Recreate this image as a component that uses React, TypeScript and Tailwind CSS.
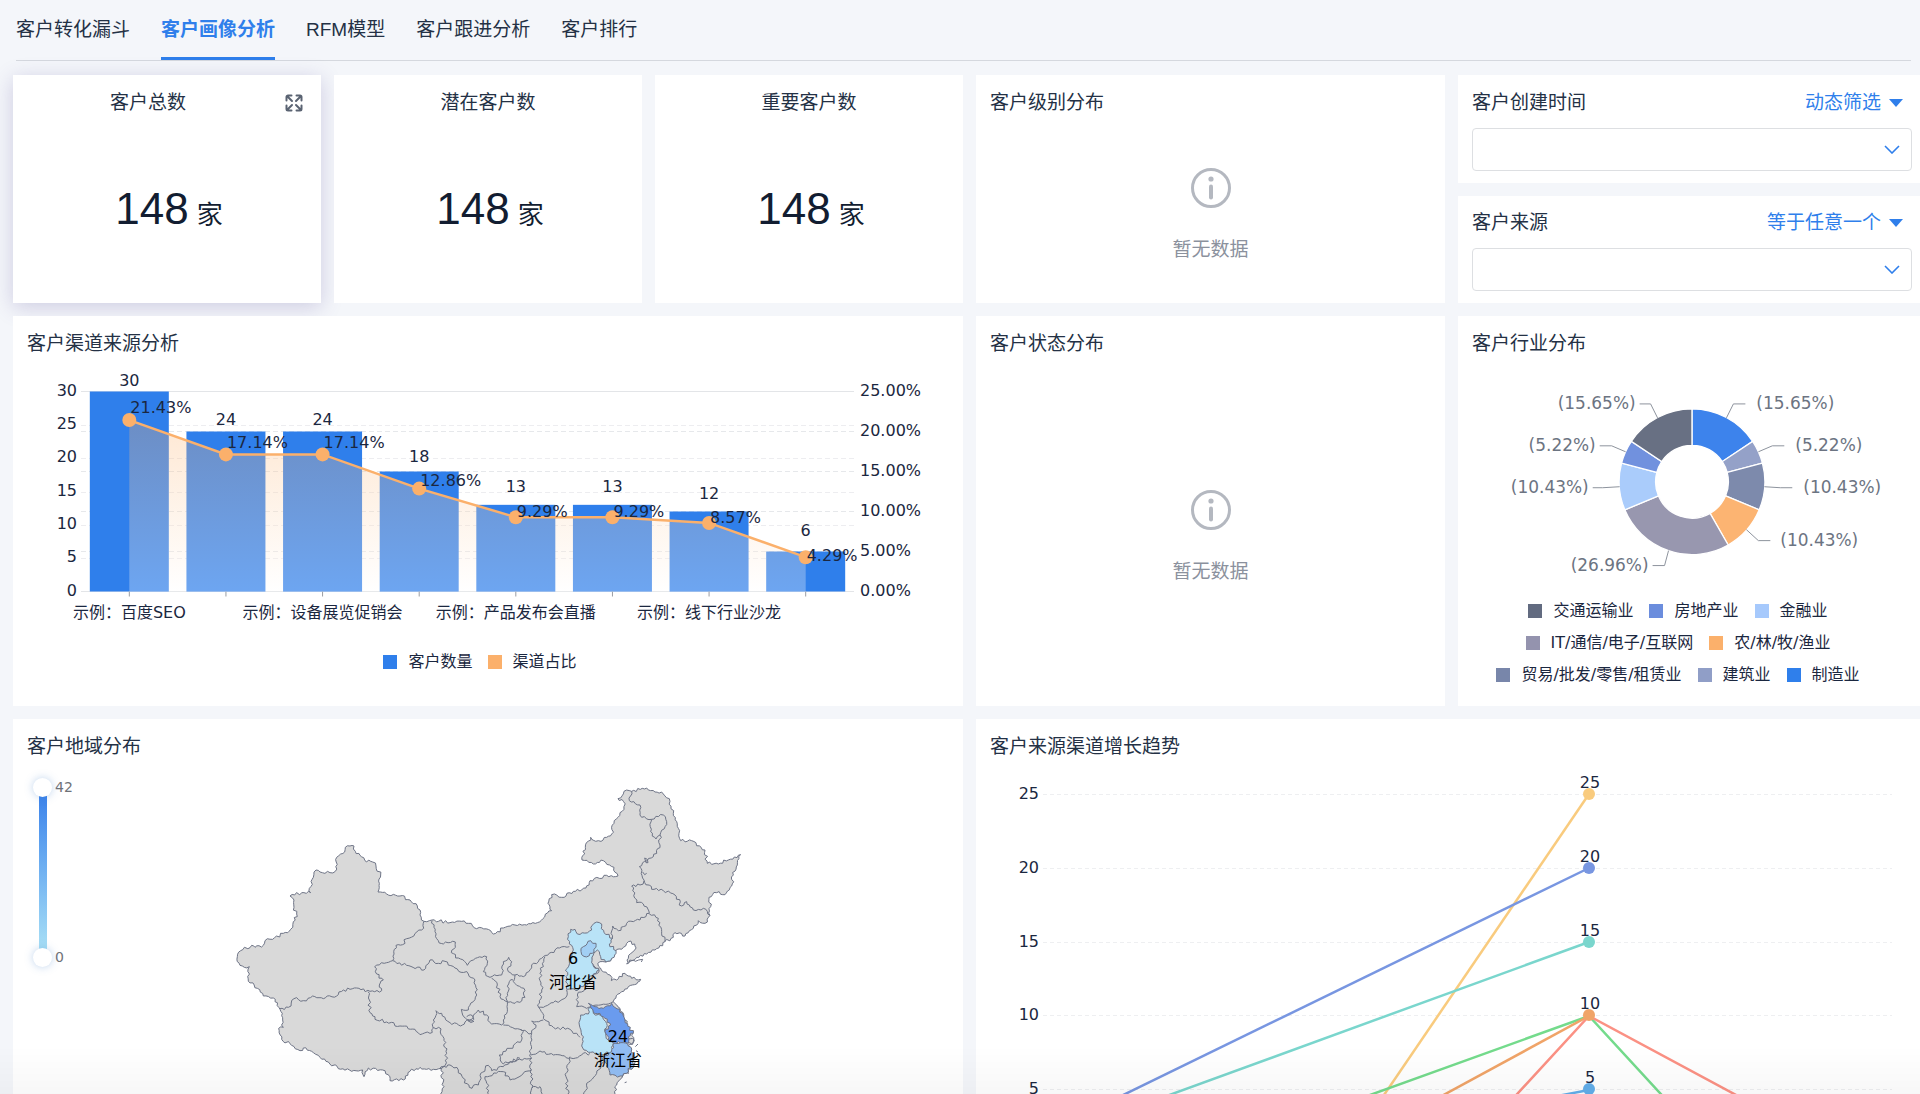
import type { ReactNode } from "react";

const TABS = ["客户转化漏斗", "客户画像分析", "RFM模型", "客户跟进分析", "客户排行"];
const ACTIVE_TAB = "客户画像分析";

const STATS = [
  { title: "客户总数", value: 148, unit: "家", hovered: true },
  { title: "潜在客户数", value: 148, unit: "家", hovered: false },
  { title: "重要客户数", value: 148, unit: "家", hovered: false },
];

// lift: how far each label's baseline sits above its bar or point
const CHANNELS = [
  { name: "示例：百度SEO", count: 30, rate: 21.43, lift: 6, rateLift: 7 },
  { name: "", count: 24, rate: 17.14, lift: 7, rateLift: 6 },
  { name: "示例：设备展览促销会", count: 24, rate: 17.14, lift: 7, rateLift: 6 },
  { name: "", count: 18, rate: 12.86, lift: 10, rateLift: 3 },
  { name: "示例：产品发布会直播", count: 13, rate: 9.29, lift: 13, rateLift: 0 },
  { name: "", count: 13, rate: 9.29, lift: 13, rateLift: 0 },
  { name: "示例：线下行业沙龙", count: 12, rate: 8.57, lift: 13, rateLift: 0 },
  { name: "", count: 6, rate: 4.29, lift: 16, rateLift: -4 },
];

const INDUSTRIES = [
  { rate: 15.65, color: "#3d83ec", line: "269,54 276,40 288,40", x: 299, y: 45 },
  { rate: 5.22, color: "#94a1c8", line: "301,88 315,82 327,82", x: 338, y: 87 },
  { rate: 10.43, color: "#7d8aac", line: "307,123 323,124 335,124", x: 346, y: 129 },
  { rate: 10.43, color: "#fcb472", line: "289,166 301,177 313,177", x: 323, y: 182 },
  { rate: 26.96, color: "#9897af", line: "211,187 207,202 195,202", x: 191, y: 207 },
  { rate: 10.43, color: "#aaccfb", line: "162,123 145,124 135,124", x: 131, y: 129 },
  { rate: 5.22, color: "#7191de", line: "168,88 154,82 142,82", x: 138, y: 87 },
  { rate: 15.65, color: "#687083", line: "200,54 193,40 182,40", x: 178, y: 45 },
];

const INDUSTRY_LEGEND = [
  { name: "交通运输业", color: "bg-[#626b80]" },
  { name: "房地产业", color: "bg-[#6b8ddd]" },
  { name: "金融业", color: "bg-[#a6c9fc]" },
  { name: "IT/通信/电子/互联网", color: "bg-[#9493ae]" },
  { name: "农/林/牧/渔业", color: "bg-[#fbb06b]" },
  { name: "贸易/批发/零售/租赁业", color: "bg-[#7886aa]" },
  { name: "建筑业", color: "bg-[#909ec7]" },
  { name: "制造业", color: "bg-[#2f7feb]" },
];

const TREND_LINES = [
  { color: "#f9cb7e", points: "393,350 613,27" },
  { color: "#7896e1", points: "102,350 613,101" },
  { color: "#7ad6cd", points: "133,350 613,175" },
  { color: "#74db8c", points: "333,350 613,249 706,350" },
  { color: "#fb9184", points: "520,350 613,249 801,350" },
  { color: "#f0a468", points: "427,350 613,249" },
  { color: "#62aeea", points: "471,350 613,323" },
];

const TREND_POINTS = [
  { value: 25, color: "#f9cb7e" },
  { value: 20, color: "#7896e1" },
  { value: 15, color: "#7ad6cd" },
  { value: 10, color: "#f0a468" },
  { value: 5, color: "#62aeea" },
];

const MAINLAND =
  "52,410 62,392 95,376 105,382 130,376 135,362 158,358 190,340 212,328 220,305 230,282 222,262 222,240 210,228 245,218 265,214 272,218 268,205 280,172 288,150 300,156 330,158 346,154 350,112 362,102 374,96 376,82 390,78 402,78 406,94 420,106 434,120 458,126 468,138 482,165 478,190 474,216 500,222 540,228 570,240 592,258 600,285 612,304 636,300 690,308 725,304 745,310 770,326 812,332 820,342 850,324 885,315 920,315 952,308 995,272 984,250 995,224 1025,232 1060,214 1098,204 1110,182 1160,166 1194,168 1182,142 1150,122 1120,132 1086,120 1096,82 1112,52 1135,62 1160,52 1175,42 1182,10 1200,-22 1212,-32 1210,-56 1194,-64 1212,-86 1235,-86 1280,-96 1305,-84 1330,-78 1350,-56 1360,-20 1375,25 1382,62 1415,62 1455,90 1462,130 1495,132 1525,120 1562,104 1552,135 1540,165 1535,198 1515,224 1490,218 1467,232 1472,260 1470,286 1455,310 1435,302 1420,325 1395,348 1365,338 1360,352 1335,365 1305,390 1280,402 1250,412 1220,432 1225,415 1244,390 1244,372 1225,365 1210,382 1186,395 1175,415 1157,426 1140,425 1135,438 1145,452 1170,465 1174,482 1190,480 1215,460 1235,475 1262,478 1250,492 1225,500 1200,520 1180,545 1200,565 1215,600 1238,640 1240,665 1225,680 1240,705 1242,735 1208,768 1190,795 1185,822 1180,900 680,900 662,822 672,800 664,745 640,748 620,748 600,742 570,754 550,780 510,782 504,764 488,750 445,744 432,770 428,750 395,754 355,746 325,726 300,712 275,694 250,684 240,692 215,676 185,658 176,625 190,622 188,600 180,568 165,545 160,534 130,528 112,505 85,484 88,440 60,436 52,410";

const BORDERS = [
  "180,566 205,562 222,536 250,542 278,528 310,536 355,524 370,510 410,504 450,514 485,512",
  "485,512 478,495 490,480 470,462 464,440 500,428 518,422",
  "518,422 528,376 548,374 560,356 605,330 612,304",
  "636,302 645,335 655,362 670,372 706,366 706,382 694,398 715,414 742,436 760,420 800,410 802,430 790,455 810,472",
  "518,422 560,436 612,450 630,420 655,430 675,424 705,444 745,462 765,480 772,510 760,545 745,570 724,568 728,585 748,600 735,606 722,618 690,608 665,580 648,572 640,600 640,625 630,640 600,644 585,628 540,618 500,606 465,598 450,578 448,540 444,515",
  "640,622 656,622 672,655 680,700 676,735 660,745",
  "660,745 690,735 715,750 730,775 748,802 775,795 782,760 805,736 815,752 850,740 870,725 900,715",
  "900,628 910,635 905,660 870,685 838,705 850,732 885,725 935,715",
  "748,600 760,585 775,570 800,585 815,612 845,615 850,600 862,575 862,545 840,530 832,495 815,475",
  "810,472 845,465 850,425 866,412 875,425 865,455 885,465 880,485 912,505 915,532 885,550 860,540 862,520 868,485 880,480",
  "885,465 910,470 935,435 965,415 1005,390 1048,380",
  "975,410 960,460 965,510 956,562 970,595",
  "956,562 1000,548 1038,532 1040,510",
  "970,595 1000,622 1050,628 1080,652",
  "850,615 900,628 935,640 948,615 935,603 970,600",
  "935,640 932,700 935,805 932,840",
  "932,705 960,693 1000,705 1045,715 1085,705 1110,700",
  "1050,710 1038,770 1045,840",
  "1150,725 1130,760 1100,790 1090,840",
  "935,750 870,780 850,755 795,770 800,790 812,840",
  "935,805 960,800 980,840",
  "1070,560 1072,525 1095,505 1115,475 1138,452",
  "1070,560 1100,565 1165,552 1180,545",
  "1235,-86 1228,-58 1260,-45 1265,-8 1295,-2 1330,-15 1340,5 1320,45 1320,75 1300,110 1258,140 1272,180",
  "1295,-2 1292,35 1308,57 1320,45",
  "1272,180 1295,208 1330,212 1365,225 1385,258 1400,245 1420,270 1450,265 1470,286",
  "1272,183 1260,195 1235,198 1250,248 1270,252 1288,280",
  "1288,280 1260,300 1220,310 1195,332 1178,318 1177,355",
  "1288,282 1315,295 1325,335 1335,365",
  "1115,405 1112,425 1122,438 1138,445",
  "1222,650 1238,655 1240,668 1222,668",
];

const PROVINCES = [
  {
    name: "河北省",
    color: "#b9e3f7",
    points:
      "1045,350 1052,328 1065,328 1072,342 1115,330 1122,310 1145,312 1152,338 1178,355 1168,372 1188,392 1175,415 1157,426 1142,410 1132,390 1120,405 1115,428 1120,438 1138,450 1105,475 1090,500 1068,512 1040,508 1038,470 1042,445 1055,410 1060,390 1048,372 1045,350",
  },
  {
    name: "北京市",
    color: "#a2cff4",
    points:
      "1090,380 1098,376 1104,364 1112,362 1118,370 1128,370 1128,382 1122,396 1110,400 1108,407 1085,404 1083,394 1090,380",
  },
  {
    name: "安徽省",
    color: "#b9e3f7",
    points:
      "1110,562 1120,580 1150,585 1160,610 1155,635 1165,660 1180,670 1175,695 1150,705 1125,702 1092,690 1085,645 1078,615 1082,585 1105,582 1110,562",
  },
  {
    name: "江苏省",
    color: "#6a9bee",
    points:
      "1105,550 1125,560 1150,565 1175,550 1200,568 1215,600 1240,640 1225,650 1225,670 1180,668 1165,660 1155,635 1172,615 1150,590 1120,577 1105,550",
  },
  {
    name: "浙江省",
    color: "#92bdf3",
    points:
      "1180,670 1210,668 1225,678 1240,700 1242,735 1208,768 1170,765 1160,740 1150,710 1175,695 1180,670",
  },
];

// Splits every segment into short steps and nudges them so borders look surveyed.
const roughen = (source: string, close = false) => {
  const points = source.split(" ").map((pair) => pair.split(",").map(Number));
  let path = `M${points[0][0]} ${points[0][1]}`;
  for (let i = 1; i < points.length; i++) {
    const [x1, y1] = points[i - 1];
    const [x2, y2] = points[i];
    const length = Math.hypot(x2 - x1, y2 - y1);
    const steps = Math.max(1, Math.round(length / 7));
    for (let s = 1; s < steps; s++) {
      const x = x1 + ((x2 - x1) * s) / steps;
      const y = y1 + ((y2 - y1) * s) / steps;
      const noise = (Math.sin(x * 12.9898 + y * 78.233) * 43758.5453) % 1;
      const shift = noise * 5;
      const nx = x - ((y2 - y1) / length) * shift;
      const ny = y + ((x2 - x1) / length) * shift;
      path += `L${nx.toFixed(1)} ${ny.toFixed(1)}`;
    }
    path += `L${x2} ${y2}`;
  }
  return close ? `${path}Z` : path;
};

const Card = ({
  title,
  className = "",
  children,
}: {
  title: string;
  className?: string;
  children: ReactNode;
}) => (
  <section className={`flex min-w-0 flex-col bg-white ${className}`}>
    <h2 className="flex h-12 shrink-0 items-center px-[14px] pt-2 text-[19px]">{title}</h2>
    {children}
  </section>
);

const StatCard = ({ title, value, unit, hovered }: (typeof STATS)[number]) => (
  <section
    className={`flex flex-col bg-white ${
      hovered ? "shadow-[0_4px_20px_rgba(84,70,150,0.24)]" : ""
    }`}
  >
    <div className="flex h-12 items-center px-[18px] pt-2">
      <h2 className={`flex-1 text-center text-[19px] ${hovered ? "pr-5" : ""}`}>{title}</h2>
      {hovered && (
        <button type="button" aria-label="全屏" className="text-[#5a6372]">
          <svg
            viewBox="0 0 18 18"
            className="size-[18px]"
            fill="none"
            stroke="currentColor"
            strokeWidth="2"
            strokeLinecap="round"
            strokeLinejoin="round"
          >
            <path d="M6.500 1.500H3a1.500 1.500 0 0 0-1.500 1.500V6.500M3 3l4 4M11.500 1.500H15a1.500 1.500 0 0 1 1.500 1.500V6.500M15 3l-4 4M1.500 11.500V15A1.500 1.500 0 0 0 3 16.500H6.500M3 15l4-4M16.500 11.500V15a1.500 1.500 0 0 1-1.500 1.500H11.500M15 15l-4-4" />
          </svg>
        </button>
      )}
    </div>
    <p className="flex flex-1 items-baseline justify-center gap-2 pt-16 pl-1 text-[#121d31]">
      <span className="text-[44px] leading-none">{value}</span>
      <span className="text-[26px] leading-none">{unit}</span>
    </p>
  </section>
);

const EmptyState = () => (
  <div className="flex flex-1 flex-col items-center justify-center gap-7 pt-[5px] text-[#8b919d]">
    <svg viewBox="0 0 40 40" className="size-10" fill="none" stroke="#b4b8c0">
      <circle cx="20" cy="20" r="18.500" strokeWidth="3" />
      <path d="M20 18.500v11" strokeWidth="4" strokeLinecap="round" />
      <circle cx="20" cy="11" r="2.600" fill="#b4b8c0" stroke="none" />
    </svg>
    <p className="text-[19px] leading-7">暂无数据</p>
  </div>
);

const FilterCard = ({ id, title, mode }: { id: string; title: string; mode: string }) => (
  <section className="flex flex-col bg-white px-[14px] pb-3">
    <div className="flex flex-1 items-center justify-between pt-[3px] pr-[9px]">
      <label htmlFor={id} className="text-[19px]">
        {title}
      </label>
      <button type="button" className="flex items-center gap-2 text-[19px] text-[#2f7feb]">
        {mode}
        <svg viewBox="0 0 14 8" className="h-2 w-[14px]" fill="currentColor">
          <path d="M0 0h14L7 8z" />
        </svg>
      </button>
    </div>
    <div className="relative">
      <select
        id={id}
        className="block h-[43px] w-full appearance-none rounded border border-[#dddfe2] bg-white px-3 text-[19px] outline-none"
      />
      <svg
        viewBox="0 0 16 9"
        className="pointer-events-none absolute top-[17px] right-3 h-[9px] w-4"
        fill="none"
        stroke="#2f7feb"
        strokeWidth="1.600"
      >
        <path d="M1 1l7 7 7-7" />
      </svg>
    </div>
  </section>
);

const ChannelChart = () => {
  const left = 68;
  const right = 841;
  const base = 227.5;
  const band = (right - left) / CHANNELS.length;
  const centerOf = (i: number) => left + band * (i + 0.5);
  const countY = (count: number) => base - (count / 30) * 200;
  const rateY = (rate: number) => base - (rate / 25) * 200;
  const line = CHANNELS.map((c, i) => `${centerOf(i)},${rateY(c.rate)}`).join(" ");

  return (
    <svg viewBox="0 0 950 270" className="block w-full text-[16px]" fill="#1b2740">
      <defs>
        <linearGradient id="rate-area" x1="0" y1="0" x2="0" y2="1">
          <stop offset="0" stopColor="#fbb06b" stopOpacity="0.300" />
          <stop offset="1" stopColor="#ffffff" stopOpacity="0.300" />
        </linearGradient>
      </defs>
      <g stroke="#e6e8eb" strokeDasharray="5 3">
        {[5, 10, 15, 20, 25].map((n) => (
          <path key={n} d={`M${left} ${Math.round(countY(n)) + 0.5}H${right}`} stroke="#ededf0" />
        ))}
        {[5, 10, 15, 20].map((n) => (
          <path key={n} d={`M${left} ${rateY(n)}H${right}`} />
        ))}
      </g>
      <path d={`M${left} 27.500H${right}M${left} ${base}H${right}`} stroke="#e3e5e8" />
      {CHANNELS.map((c, i) => (
        <g key={i}>
          <rect
            x={centerOf(i) - 39.5}
            y={countY(c.count)}
            width="79"
            height={base - countY(c.count)}
            fill="#2f7feb"
          />
          <path d={`M${centerOf(i)} ${base}v5`} stroke="#9a9da3" />
        </g>
      ))}
      <polygon
        points={`${centerOf(0)},${base} ${line} ${centerOf(7)},${base}`}
        fill="url(#rate-area)"
      />
      <polyline points={line} fill="none" stroke="#fbb06b" strokeWidth="2.500" />
      {CHANNELS.map((c, i) => (
        <circle key={i} cx={centerOf(i)} cy={rateY(c.rate)} r="7" fill="#fbb06b" />
      ))}
      {CHANNELS.map((c, i) => (
        <g key={i}>
          <text x={centerOf(i)} y={countY(c.count) - c.lift} textAnchor="middle">
            {c.count}
          </text>
          <text x={centerOf(i) + 1} y={rateY(c.rate) - c.rateLift}>
            {c.rate.toFixed(2)}%
          </text>
          <text x={centerOf(i)} y="254" textAnchor="middle">
            {c.name}
          </text>
        </g>
      ))}
      {[0, 5, 10, 15, 20, 25, 30].map((n) => (
        <text key={n} x="64" y={countY(n) + 4} textAnchor="end">
          {n}
        </text>
      ))}
      {[0, 5, 10, 15, 20, 25].map((n) => (
        <text key={n} x="847" y={rateY(n) + 4}>
          {n.toFixed(2)}%
        </text>
      ))}
    </svg>
  );
};

const IndustryChart = () => {
  const cx = 234.5;
  const cy = 118;
  const at = (share: number, r: number) => {
    const angle = (share / 100) * Math.PI * 2;
    return `${cx + r * Math.sin(angle)} ${cy - r * Math.cos(angle)}`;
  };
  let total = 0;
  return (
    <svg viewBox="0 0 469 231" className="block w-full text-[17px]" fill="#6c7482">
      {INDUSTRIES.map((item, i) => {
        const start = total;
        total += item.rate;
        return (
          <g key={i}>
            <path
              d={`M${at(start, 73)}A73 73 0 0 1 ${at(total, 73)}L${at(total, 36.5)}A36.500 36.500 0 0 0 ${at(start, 36.5)}Z`}
              fill={item.color}
              stroke="#ffffff"
              strokeWidth="1.300"
            />
            <polyline points={item.line} fill="none" stroke="#8d939d" />
            <text x={item.x} y={item.y} textAnchor={i < 4 ? "start" : "end"}>
              ({item.rate}%)
            </text>
          </g>
        );
      })}
    </svg>
  );
};

const RangeThumb = ({ label, value }: { label: string; value: number }) => (
  <input
    type="range"
    aria-label={label}
    min={0}
    max={42}
    defaultValue={value}
    className="pointer-events-none absolute inset-0 m-0 h-full w-full appearance-none bg-transparent [direction:rtl] [writing-mode:vertical-lr] [&::-webkit-slider-thumb]:pointer-events-auto [&::-webkit-slider-thumb]:size-[19px] [&::-webkit-slider-thumb]:appearance-none [&::-webkit-slider-thumb]:rounded-full [&::-webkit-slider-thumb]:bg-white [&::-webkit-slider-thumb]:shadow-[0_0_9px_rgba(70,130,200,0.35)]"
  />
);

const RegionMap = () => (
  <div className="flex items-start">
    <div className="flex w-20 shrink-0 gap-[3px] pt-[11px] pl-5 text-[14px] leading-[19px] text-[#6f7278]">
      <div className="relative flex h-[189px] w-[19px] justify-center py-4">
        <div className="w-2 bg-linear-to-b from-[#3b82ea] to-[#a9e0f5]" />
        <RangeThumb label="最小值" value={0} />
        <RangeThumb label="最大值" value={42} />
      </div>
      <div className="flex h-[189px] flex-col justify-between">
        <span>42</span>
        <span>0</span>
      </div>
    </div>
    <svg viewBox="0 0 870 400" className="block min-w-0 flex-1 text-[16px]">
      <g transform="translate(127 53) scale(0.33333)" stroke="#6d7386" strokeWidth="3" strokeLinejoin="round">
        <path d={roughen(MAINLAND, true)} fill="#d9d9d9" />
        <g fill="none">
          {BORDERS.map((border) => (
            <path key={border} d={roughen(border)} />
          ))}
          <path d="M740 590q14-12 20 2t-16 10q8 10 18 2M1226 426l14-6 6 4 10-4 12-2-4 8M1278 128l-4-14 8 4 2 10zM1268 156l6 8 6-4M1246 680l8-8M1248 692l6 4M1222 758l4 4M1214 788l6-2" />
        </g>
        {PROVINCES.map((province) => (
          <path key={province.name} d={roughen(province.points, true)} fill={province.color} />
        ))}
      </g>
      <g fill="#000000" textAnchor="middle">
        <text x="480" y="197">6</text>
        <text x="480" y="221">河北省</text>
        <text x="525" y="275">24</text>
        <text x="525" y="299">浙江省</text>
      </g>
    </svg>
  </div>
);

const TrendChart = () => {
  const yOf = (value: number) => Math.round(396 - value * 14.76);
  return (
    <svg viewBox="0 0 950 400" className="block w-full text-[16px]" fill="#1b2740">
      {TREND_POINTS.map(({ value }) => (
        <g key={value}>
          <path d={`M67 ${yOf(value) + 0.5}H916`} stroke="#eeeff1" strokeDasharray="4 3" />
          <text x="63" y={yOf(value) + 5} textAnchor="end">
            {value}
          </text>
        </g>
      ))}
      {TREND_LINES.map((line) => (
        <polyline
          key={line.color}
          points={line.points}
          fill="none"
          stroke={line.color}
          strokeWidth="2.500"
        />
      ))}
      {TREND_POINTS.map(({ value, color }) => (
        <g key={value}>
          <circle cx="613" cy={yOf(value)} r="6" fill={color} />
          <text x="614" y={yOf(value) - 6} textAnchor="middle">
            {value}
          </text>
        </g>
      ))}
    </svg>
  );
};

const App = () => {
  return (
    <div className="h-screen overflow-hidden bg-[#f4f6fa] font-['Liberation_Sans','Noto_Sans_CJK_SC',sans-serif] text-[#243145]">
      <nav className="mr-[9px] ml-4 flex gap-[31px] border-b border-[#d5d8de]">
        {TABS.map((tab) => (
          <a
            key={tab}
            href="#"
            className={`flex h-[60px] items-center border-b-[3px] pt-[3px] text-[19px] ${
              tab === ACTIVE_TAB
                ? "border-[#2f7feb] font-bold text-[#2f7feb]"
                : "border-transparent"
            }`}
          >
            {tab}
          </a>
        ))}
      </nav>

      <main className="-mr-[6px] ml-[13px] grid grid-cols-[308fr_308fr_308fr_469fr_468fr] grid-rows-[minmax(228px,auto)_minmax(390px,auto)_auto] gap-[13px] pt-[14px]">
        {STATS.map((stat) => (
          <StatCard key={stat.title} {...stat} />
        ))}
        <Card title="客户级别分布">
          <EmptyState />
        </Card>
        <div className="grid grid-rows-2 gap-[13px]">
          <FilterCard id="created-at" title="客户创建时间" mode="动态筛选" />
          <FilterCard id="source" title="客户来源" mode="等于任意一个" />
        </div>

        <Card title="客户渠道来源分析" className="col-span-3">
          <div className="font-['DejaVu_Sans','Noto_Sans_CJK_SC',sans-serif] text-[#1b2740]">
            <ChannelChart />
            <ul className="flex h-14 items-center justify-center gap-[15px] pr-4 text-[16px]">
              <li className="flex items-center gap-[11px]">
                <span className="size-[14px] bg-[#2f7feb]" />
                客户数量
              </li>
              <li className="flex items-center gap-[11px]">
                <span className="size-[14px] bg-[#fbb06b]" />
                渠道占比
              </li>
            </ul>
          </div>
        </Card>
        <Card title="客户状态分布">
          <EmptyState />
        </Card>
        <Card title="客户行业分布">
          <div className="font-['DejaVu_Sans','Noto_Sans_CJK_SC',sans-serif] text-[#1b2740]">
            <IndustryChart />
            <ul className="flex flex-wrap justify-center gap-x-4 gap-y-2 pt-1 pr-7 text-[16px] leading-6">
              {INDUSTRY_LEGEND.map((item) => (
                <li key={item.name} className="flex items-center gap-[11px]">
                  <span className={`size-[14px] ${item.color}`} />
                  {item.name}
                </li>
              ))}
            </ul>
          </div>
        </Card>

        <Card title="客户地域分布" className="col-span-3">
          <div className="font-['DejaVu_Sans','Noto_Sans_CJK_SC',sans-serif]">
            <RegionMap />
          </div>
        </Card>
        <Card title="客户来源渠道增长趋势" className="col-span-2">
          <div className="font-['DejaVu_Sans','Noto_Sans_CJK_SC',sans-serif]">
            <TrendChart />
          </div>
        </Card>
      </main>

      <div className="pointer-events-none fixed inset-x-0 bottom-0 h-12 bg-linear-to-b from-transparent to-black/[0.03]" />
    </div>
  );
};

export default App;
